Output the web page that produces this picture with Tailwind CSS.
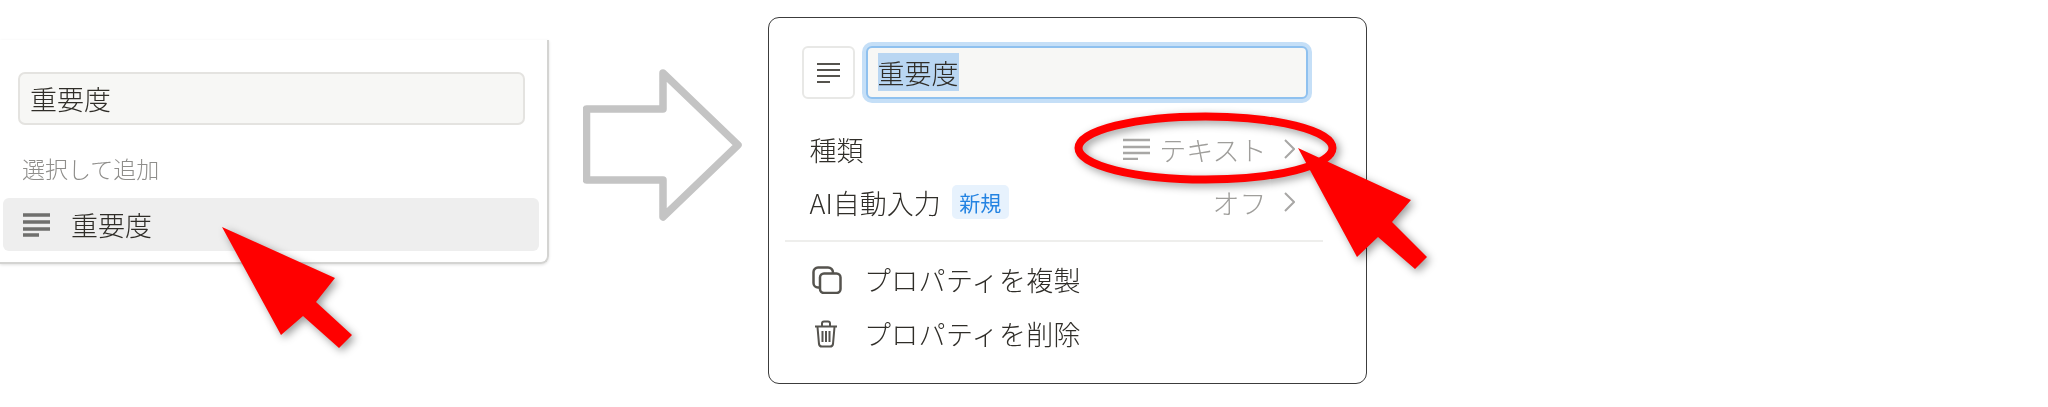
<!DOCTYPE html>
<html lang="ja"><head><meta charset="utf-8"><script src="https://cdn.jsdelivr.net/npm/@tailwindcss/browser@4"></script></head>
<body class="bg-white">
<div class="relative w-[2048px] h-[407px] overflow-hidden bg-white flex items-start text-[27px] text-[#2f2d28] font-['Noto_Sans_CJK_JP','Noto_Sans',sans-serif] font-light blur-[0.5px]">

  <!-- left panel -->
  <section class="w-[549px] h-[224px] mt-[40px] shrink-0 rounded-br-[8px] border-r-2 border-b-2 border-[#d4d4d2] shadow-[0_1px_3px_rgba(0,0,0,0.12)] pt-[32px]">
    <div class="ml-[18px] w-[507px] h-[53px] rounded-[7px] bg-[#f7f7f5] border-2 border-[#e4e3e0] flex items-center pl-[10px] leading-none">重要度</div>
    <div class="ml-[22px] mt-[29px] h-[28px] flex items-center text-[23px] text-[#8f8e8b] leading-none">選択して追加</div>
    <div class="ml-[3px] mt-[16px] w-[536px] h-[53px] rounded-[6px] bg-[#eeeeee] flex items-center pl-[20px] leading-none">
      <svg class="w-[27px] h-[24px] shrink-0" viewBox="0 0 27 24" fill="none" stroke="#6f6f6d" stroke-width="3.500"><path d="M0 2H27M0 9H27M0 16H27M0 22H16"/></svg>
      <span class="ml-[21px]">重要度</span>
    </div>
  </section>

  <!-- gray arrow -->
  <svg class="ml-[34px] mt-[66px] w-[162px] h-[158px] shrink-0" viewBox="0 0 162 158" fill="none" stroke="#c4c4c4" stroke-width="7.500" stroke-linejoin="round"><path d="M3.500 43H80V7L155 79L80 151V114H3.500Z"/></svg>

  <!-- right panel -->
  <section class="ml-[23px] mt-[17px] w-[599px] h-[367px] shrink-0 rounded-[11px] border-[1.5px] border-[#3c3c3c] flex flex-col pt-[27.5px]">
    <div class="flex items-center gap-[11px] pl-[32.5px] leading-none">
      <div class="w-[53px] h-[53px] rounded-[6px] border-2 border-[#e8e8e6] flex items-center justify-center">
        <svg class="w-[23px] h-[21px]" viewBox="0 0 23 21" fill="none" stroke="#55534e" stroke-width="2"><path d="M0 2H23M0 8H23M0 14H23M0 20H13"/></svg>
      </div>
      <div class="w-[442px] h-[53px] rounded-[6px] bg-[#f7f7f5] border-2 border-[#8fc1ef] ring-[4px] ring-[#c5dff7] flex items-center pl-[10px]">
        <span class="bg-[#b9d6f2] h-[38px] flex items-center">重要度</span>
      </div>
    </div>
    <div class="mt-[24px] h-[53px] pl-[40.5px] pr-[71.5px] flex items-center justify-between leading-none">
      <span>種類</span>
      <span class="flex items-center text-[#9f9e9b]">
        <svg class="w-[27px] h-[22px] mr-[9px]" viewBox="0 0 27 22" fill="none" stroke="#a8a7a5" stroke-width="2.500"><path d="M0 2H27M0 9H27M0 15H27M0 21H15"/></svg>
        <span>テキスト</span>
        <svg class="w-[11px] h-[20px] ml-[17px]" viewBox="0 0 11 20" fill="none" stroke="#a8a7a5" stroke-width="2"><path d="M1 1L10 10L1 19"/></svg>
      </span>
    </div>
    <div class="h-[53px] pl-[40.5px] pr-[71.5px] flex items-center justify-between leading-none">
      <span class="flex items-center">
        <span>AI自動入力</span>
        <span class="ml-[11px] w-[57px] h-[34px] rounded-[5px] bg-[#e7f2fd] text-[#2383e2] text-[21px] font-normal flex items-center justify-center">新規</span>
      </span>
      <span class="flex items-center text-[#9f9e9b]">
        <span>オフ</span>
        <svg class="w-[11px] h-[20px] ml-[17px]" viewBox="0 0 11 20" fill="none" stroke="#a8a7a5" stroke-width="2"><path d="M1 1L10 10L1 19"/></svg>
      </span>
    </div>
    <div class="mt-[11px] ml-[16px] w-[538px] h-[2px] bg-[#eeeeec]"></div>
    <div class="mt-[11px] h-[54px] pl-[43px] flex items-center leading-none">
      <svg class="w-[30px] h-[28px] shrink-0" viewBox="0 0 30 28" fill="none" stroke="#55534e" stroke-width="2.500"><rect x="8" y="7.500" width="20.500" height="19.500" rx="4"/><path d="M8 21.500H6A4.500 4.500 0 0 1 1.500 17V6A4.500 4.500 0 0 1 6 1.500H16A5 5 0 0 1 21 6.500V7.500"/></svg>
      <span class="ml-[22px] tracking-[0.3px]">プロパティを複製</span>
    </div>
    <div class="h-[54px] pl-[45px] flex items-center leading-none">
      <svg class="w-[24px] h-[28px] shrink-0" viewBox="0 0 24 28" fill="none" stroke="#55534e" stroke-width="2"><path d="M1 6.500H23M8 6V3.500A2 2 0 0 1 10 1.500H14A2 2 0 0 1 16 3.500V6M3.500 7L5 24A3 3 0 0 0 8 26.500H16A3 3 0 0 0 19 24L20.500 7M8.500 11V22M12 11V22M15.500 11V22"/></svg>
      <span class="ml-[26px] tracking-[0.3px]">プロパティを削除</span>
    </div>
  </section>

  <!-- red annotations -->
  <svg class="absolute left-0 top-0 w-[2048px] h-[407px] pointer-events-none drop-shadow-[3px_3px_4px_rgba(0,0,0,0.4)]" viewBox="0 0 2048 407">
    <path fill="#ff0000" d="M222 227L335 278L316 302L352 335L339 348L303 316L281 335Z"/>
    <ellipse cx="1205.500" cy="148" rx="127" ry="31.500" fill="none" stroke="#ff0000" stroke-width="8"/>
    <path fill="#ff0000" d="M1298 148L1411 200L1392 222L1427 257L1415 269L1378 237L1357 257Z"/>
  </svg>
</div>
</body></html>
